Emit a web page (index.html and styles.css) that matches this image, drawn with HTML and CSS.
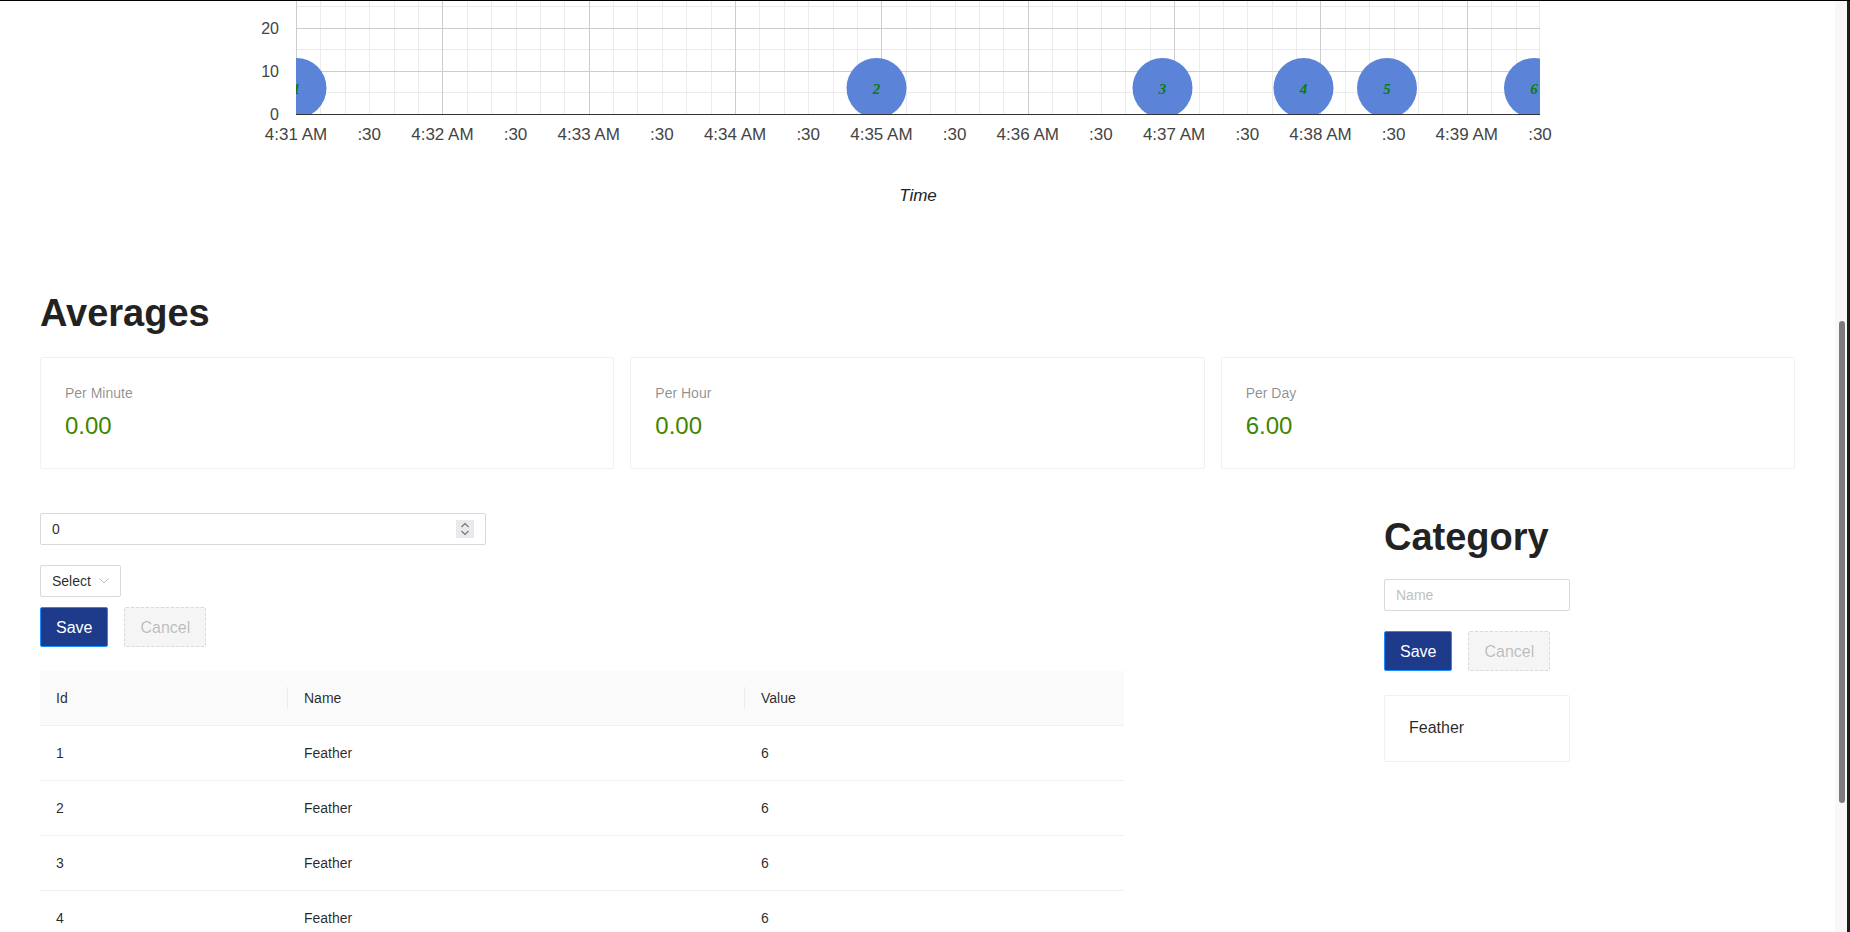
FILE: index.html
```html
<!DOCTYPE html>
<html lang="en">
<head>
<meta charset="utf-8">
<title>Feather tracker</title>
<link rel="stylesheet" href="styles.css">
</head>
<body>
<div class="screen">
  <main class="main">
    <div class="chart">
      <svg class="chart-svg" width="1835" height="289" viewBox="0 1 1835 289" xmlns="http://www.w3.org/2000/svg">
        <defs>
          <clipPath id="plot-clip"><rect x="296" y="-40" width="1244" height="154"/></clipPath>
        </defs>
        <path class="grid-minor" d="M320.5 1V114M345.5 1V114M369.5 1V114M394.5 1V114M418.5 1V114M467.5 1V114M491.5 1V114M516.5 1V114M540.5 1V114M564.5 1V114M613.5 1V114M637.5 1V114M662.5 1V114M686.5 1V114M711.5 1V114M759.5 1V114M784.5 1V114M808.5 1V114M833.5 1V114M857.5 1V114M906.5 1V114M930.5 1V114M955.5 1V114M979.5 1V114M1003.5 1V114M1052.5 1V114M1077.5 1V114M1101.5 1V114M1125.5 1V114M1150.5 1V114M1199.5 1V114M1223.5 1V114M1247.5 1V114M1272.5 1V114M1296.5 1V114M1345.5 1V114M1369.5 1V114M1394.5 1V114M1418.5 1V114M1442.5 1V114M1491.5 1V114M1516.5 1V114M1539.5 1V114M296 6.5H1540M296 49.5H1540M296 92.5H1540"/>
        <path class="grid-major" d="M296.5 1V114M442.5 1V114M589.5 1V114M735.5 1V114M881.5 1V114M1028.5 1V114M1174.5 1V114M1320.5 1V114M1467.5 1V114M296 28.5H1540M296 71.5H1540"/>
        <g clip-path="url(#plot-clip)">
          <circle class="dot" cx="296.5" cy="88" r="30"/>
          <circle class="dot" cx="876.5" cy="88" r="30"/>
          <circle class="dot" cx="1162.5" cy="88" r="30"/>
          <circle class="dot" cx="1303.5" cy="88" r="30"/>
          <circle class="dot" cx="1387" cy="88" r="30"/>
          <circle class="dot" cx="1534" cy="88" r="30"/>
          <text class="dot-label" x="296.5" y="89">1</text>
          <text class="dot-label" x="876.5" y="89">2</text>
          <text class="dot-label" x="1162.5" y="89">3</text>
          <text class="dot-label" x="1303.5" y="89">4</text>
          <text class="dot-label" x="1387" y="89">5</text>
          <text class="dot-label" x="1534" y="89">6</text>
        </g>
        <path class="axis" d="M296 114.5H1540"/>
        <g class="y-ticks">
          <text x="279" y="28.5">20</text>
          <text x="279" y="71.5">10</text>
          <text x="279" y="114">0</text>
        </g>
        <g class="x-ticks">
          <text x="296" y="134.5">4:31 AM</text>
          <text x="369.2" y="134.5">:30</text>
          <text x="442.4" y="134.5">4:32 AM</text>
          <text x="515.5" y="134.5">:30</text>
          <text x="588.7" y="134.5">4:33 AM</text>
          <text x="661.9" y="134.5">:30</text>
          <text x="735.1" y="134.5">4:34 AM</text>
          <text x="808.2" y="134.5">:30</text>
          <text x="881.4" y="134.5">4:35 AM</text>
          <text x="954.6" y="134.5">:30</text>
          <text x="1027.8" y="134.5">4:36 AM</text>
          <text x="1100.9" y="134.5">:30</text>
          <text x="1174.1" y="134.5">4:37 AM</text>
          <text x="1247.3" y="134.5">:30</text>
          <text x="1320.5" y="134.5">4:38 AM</text>
          <text x="1393.6" y="134.5">:30</text>
          <text x="1466.8" y="134.5">4:39 AM</text>
          <text x="1540" y="134.5">:30</text>
        </g>
        <text class="axis-title" x="918" y="195">Time</text>
      </svg>
    </div>

    <div class="content">
      <h1 class="heading averages-title">Averages</h1>
      <div class="stats">
        <div class="stat-card">
          <div class="stat-title">Per Minute</div>
          <div class="stat-value">0.00</div>
        </div>
        <div class="stat-card">
          <div class="stat-title">Per Hour</div>
          <div class="stat-value">0.00</div>
        </div>
        <div class="stat-card">
          <div class="stat-title">Per Day</div>
          <div class="stat-value">6.00</div>
        </div>
      </div>

      <div class="workspace">
        <section class="entries">
          <div class="number-input">
            <span class="number-value">0</span>
            <svg class="spinner" width="18" height="18" viewBox="0 0 18 18" xmlns="http://www.w3.org/2000/svg">
              <rect width="18" height="18" fill="#e9e9ed"/>
              <polyline points="5.5,7 9,3.5 12.5,7" fill="none" stroke="#6f6f75" stroke-width="1.1"/>
              <polyline points="5.5,11 9,14.5 12.5,11" fill="none" stroke="#6f6f75" stroke-width="1.1"/>
            </svg>
          </div>
          <div class="select">
            <span class="select-text">Select</span>
            <svg class="select-arrow" width="10" height="6" viewBox="0 0 10 6" xmlns="http://www.w3.org/2000/svg">
              <polyline points="0.5,0.5 5,5 9.5,0.5" fill="none" stroke="#bfbfbf" stroke-width="1"/>
            </svg>
          </div>
          <div class="actions">
            <button class="btn btn-primary" type="button">Save</button>
            <button class="btn btn-dashed" type="button" disabled>Cancel</button>
          </div>
          <table class="table">
            <colgroup>
              <col class="col-id">
              <col class="col-name">
              <col class="col-value">
            </colgroup>
            <thead>
              <tr><th class="th-sep">Id</th><th class="th-sep">Name</th><th>Value</th></tr>
            </thead>
            <tbody>
              <tr><td>1</td><td>Feather</td><td>6</td></tr>
              <tr><td>2</td><td>Feather</td><td>6</td></tr>
              <tr><td>3</td><td>Feather</td><td>6</td></tr>
              <tr><td>4</td><td>Feather</td><td>6</td></tr>
            </tbody>
          </table>
        </section>

        <aside class="category">
          <h1 class="heading category-title">Category</h1>
          <input class="text-input" type="text" placeholder="Name">
          <div class="actions actions-category">
            <button class="btn btn-primary" type="button">Save</button>
            <button class="btn btn-dashed" type="button" disabled>Cancel</button>
          </div>
          <div class="category-card">Feather</div>
        </aside>
      </div>
    </div>
  </main>
  <div class="scrollbar"><div class="thumb"></div></div>
  <div class="frame-edge"></div>
</div>
</body>
</html>
```

FILE: styles.css
```css
* {
  box-sizing: border-box;
}

html,
body {
  margin: 0;
  height: 100%;
  overflow: hidden;
  background: #fff;
}

body {
  font-family: "Liberation Sans", Arial, sans-serif;
  font-size: 14px;
  color: rgba(0, 0, 0, 0.85);
}

.screen {
  display: flex;
  height: 932px;
  border-top: 1px solid #000;
}

.main {
  flex: 1;
  min-width: 0;
  overflow: hidden;
}

/* chart */
.chart-svg {
  display: block;
}

.grid-minor {
  fill: none;
  stroke: #ebebeb;
  stroke-width: 1;
}

.grid-major {
  fill: none;
  stroke: #cdcdcd;
  stroke-width: 1;
}

.axis {
  fill: none;
  stroke: #333;
  stroke-width: 1;
}

.dot {
  fill: #5b84d8;
}

.dot-label {
  font-family: "Liberation Serif", "Times New Roman", serif;
  font-weight: 700;
  font-style: italic;
  font-size: 15px;
  fill: #0a7d0a;
  text-anchor: middle;
  dominant-baseline: central;
}

.y-ticks text {
  font-family: "Liberation Sans", Arial, sans-serif;
  font-size: 16px;
  fill: #444;
  text-anchor: end;
  dominant-baseline: central;
}

.x-ticks text {
  font-family: "Liberation Sans", Arial, sans-serif;
  font-size: 17px;
  fill: #444;
  text-anchor: middle;
  dominant-baseline: central;
}

.axis-title {
  font-family: "Liberation Sans", Arial, sans-serif;
  font-size: 17px;
  font-style: italic;
  fill: #222;
  text-anchor: middle;
  dominant-baseline: central;
}

/* content */
.content {
  padding: 0 40px;
}

.heading {
  margin: 0;
  font-size: 38px;
  line-height: 46px;
  font-weight: 700;
  color: #222;
}

.averages-title {
  margin-bottom: 21px;
}

.stats {
  display: grid;
  grid-template-columns: repeat(3, 1fr);
  gap: 16px;
}

.stat-card {
  border: 1px solid #f0f0f0;
  border-radius: 2px;
  padding: 24px;
}

.stat-title {
  font-size: 14px;
  line-height: 22px;
  color: rgba(0, 0, 0, 0.45);
  margin-bottom: 4px;
}

.stat-value {
  font-size: 24px;
  line-height: 36px;
  color: #3f8600;
}

.workspace {
  display: flex;
  align-items: flex-start;
  margin-top: 44px;
}

.entries {
  width: 1084px;
  flex: none;
}

.number-input {
  width: 446px;
  height: 32px;
  border: 1px solid #d9d9d9;
  border-radius: 2px;
  display: flex;
  align-items: center;
  justify-content: space-between;
  padding: 0 11px;
  font-size: 14px;
  color: rgba(0, 0, 0, 0.85);
}

.spinner {
  display: block;
}

.select {
  margin-top: 20px;
  width: max-content;
  height: 32px;
  border: 1px solid #d9d9d9;
  border-radius: 2px;
  display: flex;
  align-items: center;
  gap: 8px;
  padding: 0 11px;
  font-size: 14px;
  color: rgba(0, 0, 0, 0.85);
}

.select-arrow {
  display: block;
}

.actions {
  display: flex;
  gap: 16px;
  margin-top: 10px;
}

.btn {
  height: 40px;
  padding: 1px 15px 0;
  font-family: "Liberation Sans", Arial, sans-serif;
  font-size: 16px;
  border-radius: 2px;
  cursor: pointer;
}

.btn-primary {
  background: #1e3a8a;
  border: 1px solid #1890ff;
  color: #fff;
}

.btn-dashed {
  background: #f5f5f5;
  border: 1px dashed #d9d9d9;
  color: rgba(0, 0, 0, 0.25);
  cursor: not-allowed;
}

/* table */
.table {
  margin-top: 24px;
  width: 1084px;
  border-collapse: separate;
  border-spacing: 0;
  table-layout: fixed;
  font-size: 14px;
}

.col-id {
  width: 248px;
}

.col-name {
  width: 457px;
}

.col-value {
  width: 379px;
}

.table th,
.table td {
  padding: 16px;
  line-height: 22px;
  text-align: left;
  border-bottom: 1px solid #f0f0f0;
  color: rgba(0, 0, 0, 0.85);
}

.table th {
  font-weight: 400;
  background: #fafafa;
}

.table th.th-sep {
  background: linear-gradient(#ebebeb, #ebebeb) right center / 1px 22px no-repeat, #fafafa;
}

/* category */
.category {
  margin-left: 260px;
  width: 186px;
  flex: none;
}

.category-title {
  margin-top: 1px;
}

.text-input {
  display: block;
  width: 186px;
  height: 32px;
  margin-top: 19px;
  border: 1px solid #d9d9d9;
  border-radius: 2px;
  padding: 4px 11px;
  font-family: "Liberation Sans", Arial, sans-serif;
  font-size: 14px;
  color: rgba(0, 0, 0, 0.85);
  outline: none;
}

.text-input::placeholder {
  color: #bfbfbf;
}

.actions-category {
  margin-top: 20px;
}

.category-card {
  margin-top: 24px;
  border: 1px solid #f0f0f0;
  border-radius: 2px;
  padding: 20px 24px 21px;
  font-size: 16px;
  line-height: 24px;
  color: rgba(0, 0, 0, 0.85);
}

/* window chrome */
.scrollbar {
  width: 12px;
  flex: none;
  background: #f8f8f8;
  padding-left: 4px;
}

.thumb {
  width: 6px;
  height: 482px;
  margin-top: 320px;
  border-radius: 3px;
  background: #7b7b7b;
}

.frame-edge {
  width: 3px;
  flex: none;
  background: #1f1c1e;
}
```
